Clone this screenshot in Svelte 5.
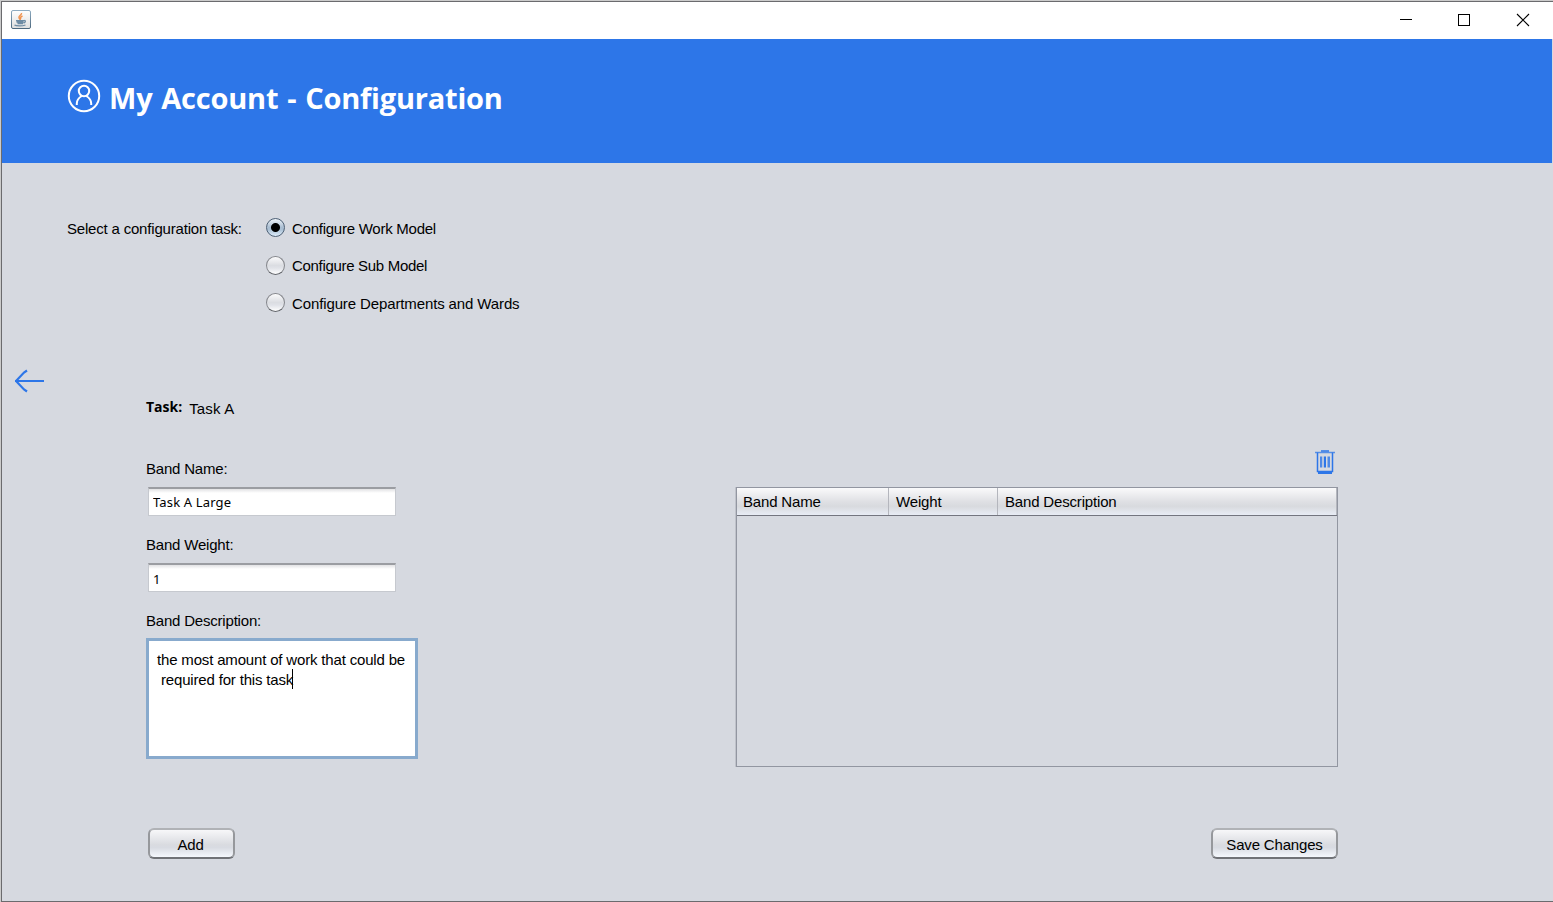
<script>
  const tasks = [
    { name: 'Configure Work Model', spacing: -0.25 },
    { name: 'Configure Sub Model', spacing: -0.31 },
    { name: 'Configure Departments and Wards', spacing: -0.12 }
  ];
  let selected = $state(0);
  const columns = ['Band Name', 'Weight', 'Band Description'];
</script>

<div class="desktop">
<div class="window">
  <div class="titlebar">
    <svg class="java" width="20" height="20" viewBox="0 0 20 20">
      <defs>
        <linearGradient id="jb" x1="0" y1="0" x2="0" y2="1"><stop offset="0" stop-color="#8eabc1" /><stop offset="1" stop-color="#4c687e" /></linearGradient>
        <linearGradient id="jf" x1="0" y1="0" x2="0" y2="1"><stop offset="0" stop-color="#fff" /><stop offset="1" stop-color="#dedede" /></linearGradient>
      </defs>
      <rect x=".5" y=".5" width="19" height="18" rx="1.5" fill="url(#jf)" stroke="url(#jb)" />
      <path d="M10.500 3c.5 2-3 2.500-2.500 4.500.2 1 1.200 1.500 1.300 2.500M11.500 6c-2 .8-2.500 1.800-1.500 3" fill="none" stroke="#f0924e" stroke-width="1.500" />
      <path d="M5 10.600h8M5.500 12h7M6.500 13.500h5.500M13 10.500c2.200 0 1.500 2-.5 2.500M3.500 15c2 1.300 8 1.200 11 0" fill="none" stroke="#6d8ba3" stroke-width="1.300" />
    </svg>
    <svg class="controls" width="130" height="14" viewBox="0 0 130 14" fill="none" stroke="#000">
      <path d="M0 7.500h12" shape-rendering="crispEdges" />
      <rect x="58.500" y="2.500" width="11" height="11" shape-rendering="crispEdges" />
      <path d="M117 2l12 12M129 2l-12 12" stroke-width="1.100" />
    </svg>
  </div>

  <header>
    <svg width="34" height="34" viewBox="0 0 34 34" fill="none" stroke="#fff" stroke-width="2">
      <circle cx="17" cy="17" r="15.200" />
      <circle cx="17" cy="12" r="5.200" />
      <path d="M9.800 26v-1.500c0-3 2-5.800 5-7.500M24.200 26v-1.500c0-3-2-5.800-5-7.500" />
    </svg>
    <h1>My Account - Configuration</h1>
  </header>

  <main>
    <section class="picker">
      <span class="prompt">Select a configuration task:</span>
      <div class="options" role="radiogroup">
        {#each tasks as task, i}
          <button class="option" role="radio" aria-checked={selected === i} onclick={() => (selected = i)}>
            <span class="dot" class:on={selected === i}></span><span style:letter-spacing="{task.spacing}px">{task.name}</span>
          </button>
        {/each}
      </div>
    </section>

    <section class="editor">
      <svg class="back" width="30" height="24" viewBox="0 0 30 24" fill="none" stroke="#2d76e8" stroke-width="2">
        <path d="M0 12h29" /><path d="M12 1.500l-3 2L1 12l8 8.500 3 2" stroke-width="2.200" />
      </svg>

      <div class="form">
        <div class="task"><b>Task:</b><span>Task A</span></div>
        <label for="name">Band Name:</label>
        <input id="name" value="Task A Large" />
        <label for="weight">Band Weight:</label>
        <input id="weight" value="1" />
        <span class="label">Band Description:</span>
        <div class="area"><p>the most amount of work that could be</p><p class="second">required for this task<i></i></p></div>
        <button class="push add">Add</button>
      </div>

      <div class="bands">
        <svg class="trash" width="20" height="24" viewBox="0 0 20 24" fill="none" stroke="#2d76e8">
          <path d="M0 2.500h20" stroke-width="1.500" opacity=".75" /><path d="M6 1h8" stroke-width="1.500" />
          <path d="M2.500 2.500v19h15v-19" stroke-width="1.500" /><path d="M3 23h14" stroke-width="2" />
          <path d="M6 6.500v11M14 6.500v11" stroke-width="1.600" /><path d="M10 6.500v11" stroke-width="2" /><path d="M8 6.500v11M12.500 6.500v11" opacity=".4" />
        </svg>
        <div class="table">
          <div class="head">{#each columns as column}<span>{column}</span>{/each}</div>
        </div>
        <button class="push save">Save Changes</button>
      </div>
    </section>
  </main>
</div>
</div>

<style>
  :global(body) { margin: 0; background: #cbcbcb; overflow: hidden; }
  * { box-sizing: border-box; }
  .desktop { width: 1553px; height: 902px; padding: 1px 0 0 1px; background: #cbcbcb; }
  .window {
    height: 901px; border: 1px solid #6b6b6e; border-right: 0; background: #d6d9e0;
    font: 15px/20px "Liberation Sans", Arial, sans-serif; letter-spacing: -.17px; color: #000; white-space: nowrap;
  }
  .titlebar { height: 37px; background: #fff; display: flex; justify-content: space-between; padding: 8px 23px 0 9px; }
  .controls { margin-top: 2px; overflow: visible; }
  header { height: 124px; margin-right: 1px; background: #2d76e8; display: flex; padding: 40px 0 0 65px; }
  h1 { margin: -1px 0 0 8px; font: 700 29px/40px "Open Sans", "Noto Sans", sans-serif; letter-spacing: -.2px; word-spacing: 1.500px; color: #fff; }
  .picker { display: flex; padding: 56px 0 0 65px; }
  .prompt { width: 199px; letter-spacing: -.19px; }
  .options { display: flex; flex-direction: column; gap: 17.500px; }
  .option { display: flex; align-items: flex-start; gap: 7px; border: 0; padding: 0; background: none; font: inherit; color: #000; height: 20px; }
  .option:nth-child(2) span:last-child { margin-top: -1px; }
  .dot {
    width: 19px; height: 19px; margin-top: -1px; border-radius: 50%; border: 1.500px solid #85878c; border-bottom-color: #63666b;
    background: linear-gradient(#fbfbfc, #dbdde2 50%, #e0e2e8 65%, #fff);
  }
  .dot.on { border-color: #4d6075; background: radial-gradient(circle, #000 0 4px, transparent 5px), linear-gradient(#f0f5fa, #a9bdd1 50%, #adc2d6 65%, #dfeefc); }
  .editor { display: flex; padding: 55px 0 0 13px; }
  .back { flex: none; }
  .form { width: 272px; margin: 28px 0 0 101px; display: flex; flex-direction: column; }
  .task { display: flex; height: 20px; gap: 7px; margin-bottom: 42px; letter-spacing: 0; }
  .task b { font: 700 14px/20px "Open Sans", "Noto Sans", sans-serif; }
  .task span { margin-top: 2px; letter-spacing: .15px; }
  label, .label { display: block; height: 20px; letter-spacing: -.2px; }
  input {
    width: 248px; height: 29px; margin: 8px 0 19px 2px; padding: 1px 4px 1px; border: 1px solid #c6c9cf; border-top: 2px solid #9b9da2;
    background: linear-gradient(#e2e2e4, #fff 4px); font: 13px/20px "Noto Sans", sans-serif; letter-spacing: .15px; color: #000; outline: 0; border-radius: 0;
  }
  #weight { padding-top: 2px; padding-bottom: 0; }
  .area { width: 272px; height: 121px; margin-top: 7px; border: 3px solid #88aacd; background: #fff; padding: 9px 8px; letter-spacing: -.17px; }
  .area p { margin: 0; }
  .area .second { padding-left: 4px; }
  .area i { display: inline-block; width: 1px; height: 20px; background: #000; vertical-align: top; margin: -1px 0 0 -1px; }
  .push {
    height: 31px; padding: 2px 0 0; border: 1.500px solid #85878c; border-width: 2px; border-color: #b0b2b6 #96989c #707277; border-radius: 6px;
    background: linear-gradient(#f7f7f9, #d9dbe0 55%, #d8dbe2 65%, #f5f8fd); font: inherit; letter-spacing: -.17px; color: #000;
  }
  .add { width: 87px; margin: 69px 0 0 2px; padding-right: 2px; }
  .bands { width: 603px; margin: 81px 0 0 317px; display: flex; flex-direction: column; align-items: flex-end; }
  .trash { margin-right: 3px; }
  .table { width: 602px; height: 280px; margin-top: 13px; border: 1px solid #9296a1; box-shadow: -1px 0 #bfc2ca; }
  .head { height: 28px; display: grid; grid-template-columns: 152px 109px 1fr; border-bottom: 1px solid #73757f; background: linear-gradient(#fafafb, #dfe0e4 50%, #d8dade 68%, #e8ecf5); }
  .head span { padding: 4px 0 0 7px; border-right: 1px solid #b4b6bd; }
  .head span:first-child { padding-left: 6px; }
  .save { width: 127px; margin-top: 61px; }
</style>
